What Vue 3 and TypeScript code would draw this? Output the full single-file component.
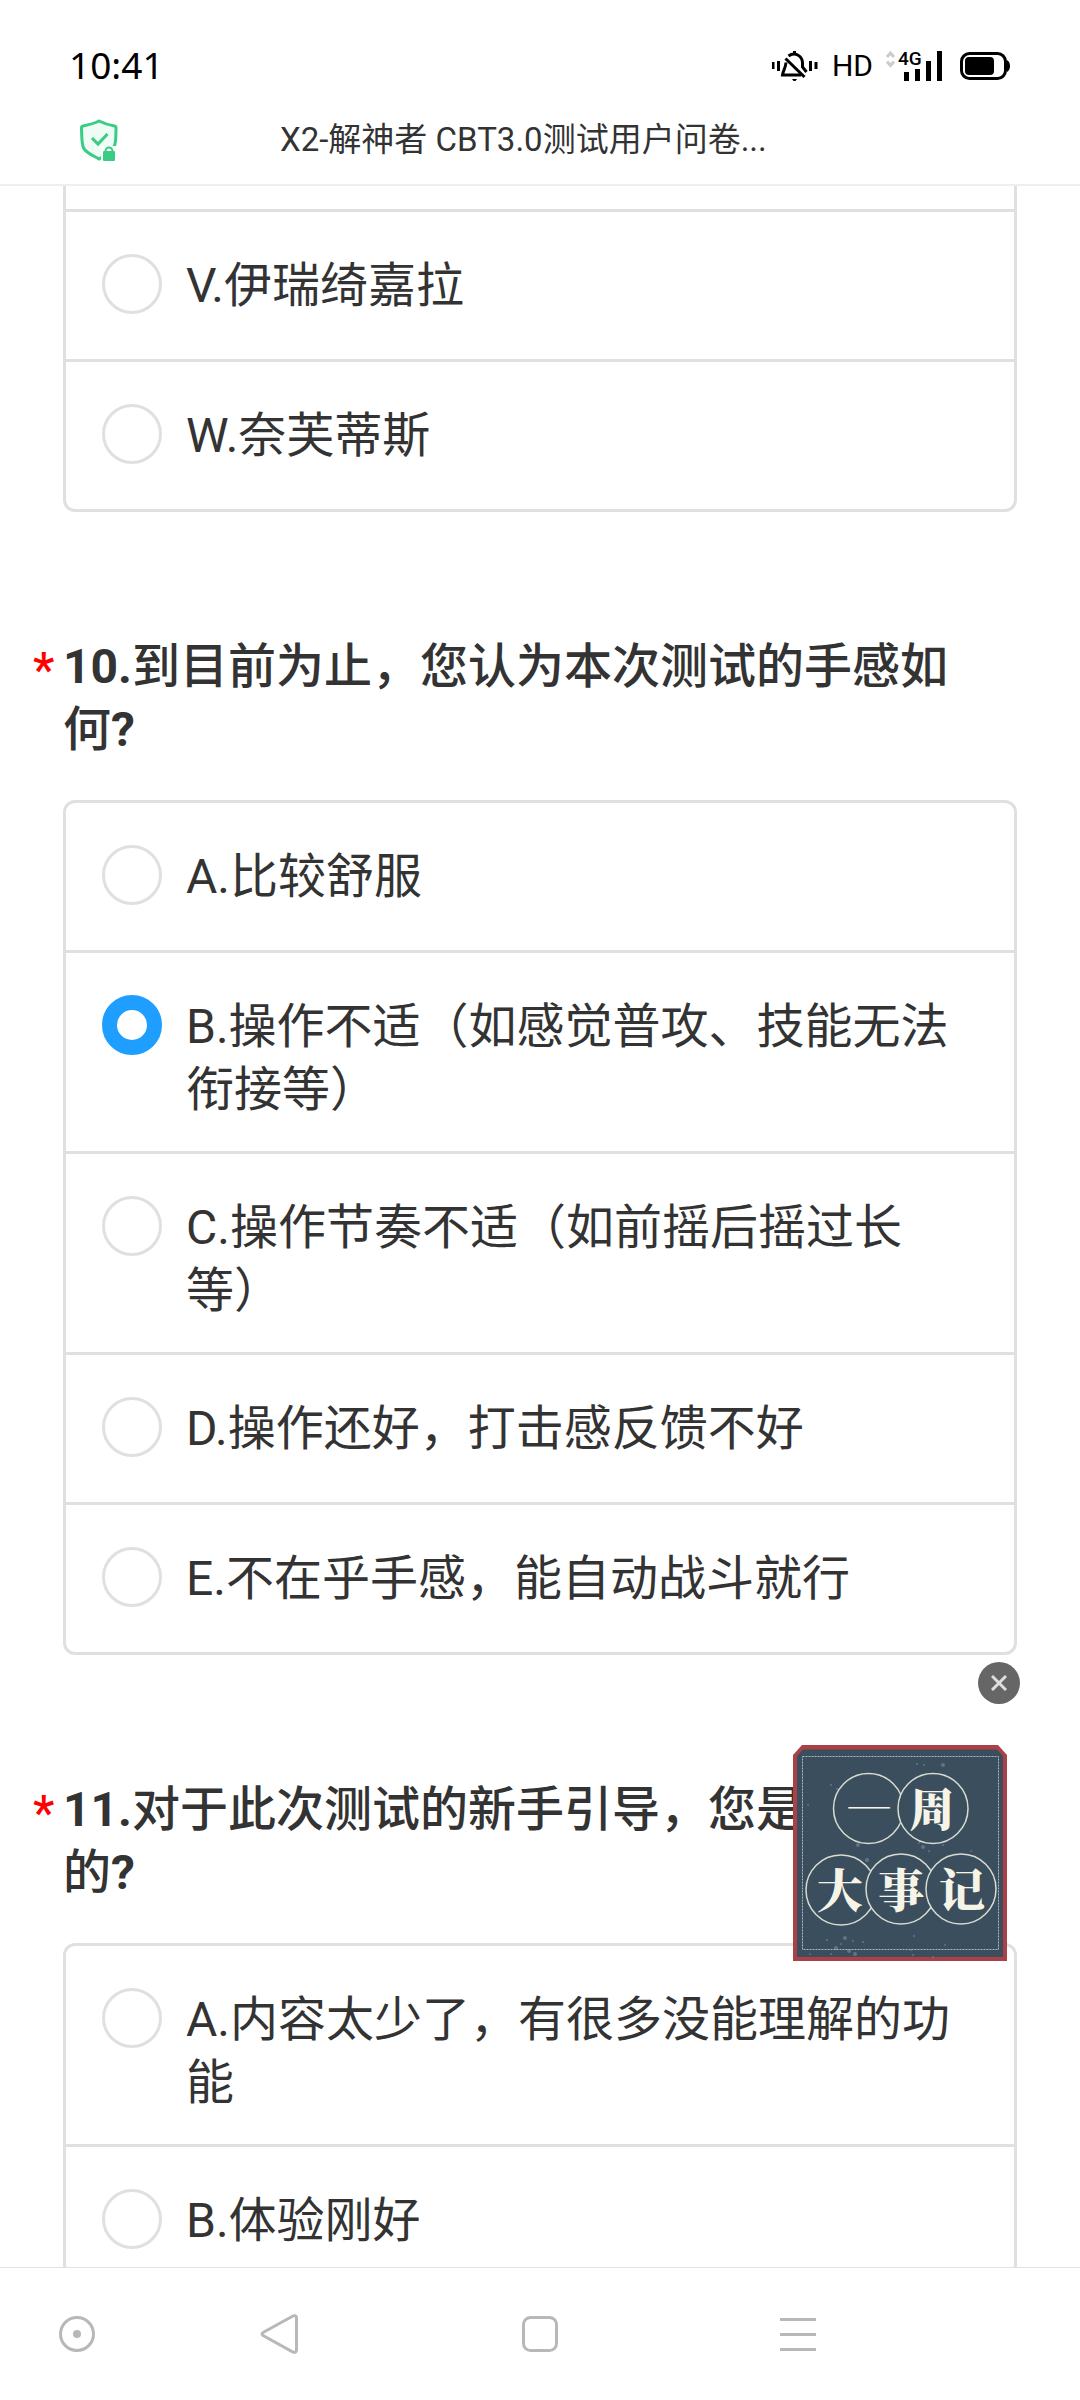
<script setup lang="ts">
import { ref } from 'vue'

interface Question {
  id: string
  number: string
  title: string
  options: string[]
}

const questions: Question[] = [
  {
    id: 'q9',
    number: '',
    title: '',
    options: ['V.伊瑞绮嘉拉', 'W.奈芙蒂斯'],
  },
  {
    id: 'q10',
    number: '10.',
    title: '到目前为止，您认为本次测试的手感如何',
    options: [
      'A.比较舒服',
      'B.操作不适（如感觉普攻、技能无法衔接等）',
      'C.操作节奏不适（如前摇后摇过长等）',
      'D.操作还好，打击感反馈不好',
      'E.不在乎手感，能自动战斗就行',
    ],
  },
  {
    id: 'q11',
    number: '11.',
    title: '对于此次测试的新手引导，您是\n的',
    options: ['A.内容太少了，有很多没能理解的功能', 'B.体验刚好'],
  },
]

const answers = ref<Record<string, number>>({ q9: -1, q10: 1, q11: -1 })
const showPromo = ref(true)

const specks: [number, number, number][] = [
  [124, 19, 1], [131, 20, 1], [150, 20, 2], [38, 40, 1], [44, 44, 1], [15, 60, 1],
  [65, 100, 2], [74, 115, 2], [130, 102, 2], [136, 106, 1], [126, 98, 1], [150, 100, 1],
  [178, 106, 1], [52, 193, 2], [60, 196, 1], [43, 203, 2], [56, 206, 2], [62, 209, 2],
  [70, 197, 1], [48, 199, 1], [38, 209, 1], [118, 205, 1], [120, 210, 1], [152, 200, 1],
  [121, 191, 1], [17, 209, 1], [34, 195, 1], [140, 212, 1],
]
</script>

<template>
  <div class="phone">
    <div class="status">
      <span class="clock">10:41</span>
      <div class="indicators">
        <svg class="bell" width="46" height="32" viewBox="0 0 46 32" fill="none" stroke="#000" stroke-width="3">
          <path d="M1 12v7M6.500 11v10M38.500 11v10M44 12v7" />
          <path d="M22.500 1v3M16.500 6c6-4.500 14-.5 14 7v4l4 5" />
          <path d="M14 12.500c-.5 6-3 8-3.500 12.500H29M13.500 8.500 32.500 27" />
          <path d="M20 29h5l-1.500 2h-2z" fill="#000" stroke="none" />
        </svg>
        <span class="hd">HD</span>
        <div class="signal">
          <svg width="56" height="32" viewBox="0 0 56 32">
            <path d="M1 7l3.500-4L8 7M1 11.500l3.500 4 3.500-4" fill="none" stroke="#ccc" stroke-width="3" />
            <path d="M18 22h5v9h-5zM29 19h5v12h-5zM40 11h5v20h-5zM51 1h5v30h-5z" />
          </svg>
          <span class="network">4G</span>
        </div>
        <svg class="battery" width="50" height="30" viewBox="0 0 50 30">
          <rect x="1.500" y="2.500" width="44" height="25" rx="8" fill="none" stroke="#000" stroke-width="3" />
          <rect x="5" y="6" width="29" height="18" rx="4" />
          <path d="M47 9q3 2 3 6t-3 6z" />
        </svg>
      </div>
    </div>

    <header class="bar">
      <svg class="shield" width="38" height="42" viewBox="0 0 38 42" fill="none" stroke="#38cc84" stroke-width="3">
        <path d="M19 2C14 4.500 8 6 3 7c-1 0-1.500 1-1.500 2 .3 9 0 15 2 20C6 34 14 37 19 40c9-5 15-8 16-15 1-5 1-11 1-16 0-1-.5-2-1.500-2C29 6 24 4.500 19 2z" fill="#effbf5" />
        <path d="m12 19 6 6 9.500-10" />
        <path d="M21 27h17v15H21z" fill="#fff" stroke="none" />
        <path d="M25.500 33v-1a3.500 3.500 0 0 1 7 0v1" stroke-width="2" />
        <rect x="23" y="32" width="12" height="10" rx="1" fill="#38cc84" stroke="none" />
      </svg>
      <h1 class="page-title">X2-解神者 CBT3.0测试用户问卷...</h1>
    </header>

    <main class="survey">
      <section v-for="q in questions" :key="q.id" class="question">
        <h2 v-if="q.title" class="title">
          <span class="star">*</span>
          <span :id="q.id" class="title-text"><b>{{ q.number }}</b>{{ q.title }}<b>?</b></span>
        </h2>
        <div class="card" :class="{ continued: !q.title }" role="radiogroup">
          <label v-for="(option, i) in q.options" :key="option" class="option">
            <input v-model="answers[q.id]" type="radio" :name="q.id" :value="i" />
            <span>{{ option }}</span>
          </label>
        </div>
      </section>
    </main>

    <aside v-if="showPromo" class="promo">
      <button class="close" type="button" aria-label="关闭" @click="showPromo = false">
        <svg width="16" height="16" viewBox="0 0 16 16" stroke="#ddd" stroke-width="3">
          <path d="m1 1 14 14M15 1 1 15" />
        </svg>
      </button>
      <a href="#" class="badge">
        <svg width="214" height="216" viewBox="0 0 214 216">
          <path d="M9 0H205L214 10V216H0V10z" fill="#a94147" />
          <path d="M10 4.500H204L210 11V212H4V11z" fill="#3a4e5e" />
          <circle v-for="(s, i) in specks" :key="i" :cx="s[0]" :cy="s[1]" :r="s[2]" fill="#9fb0ba" opacity=".4" />
          <rect x="9.500" y="11.500" width="196" height="193" fill="none" stroke="#aeb9bf" stroke-dasharray="2 1" />
          <g fill="#3a4e5e" stroke="#d8dcd0" stroke-width="1.500">
            <circle cx="75.500" cy="63.500" r="35" />
            <circle cx="140" cy="63.500" r="35" />
            <circle cx="48" cy="145" r="35" />
            <circle cx="108" cy="144" r="35" />
            <circle cx="168" cy="144" r="35" />
          </g>
          <g class="badge-text" text-anchor="middle">
            <text class="thin" x="76" y="80">一</text>
            <text x="139" y="81">周</text>
            <text x="47" y="162">大</text>
            <text x="108" y="162">事</text>
            <text x="169" y="162">记</text>
          </g>
        </svg>
      </a>
    </aside>

    <nav class="keys">
      <button type="button" aria-label="助手">
        <svg width="40" height="40" viewBox="0 0 40 40">
          <circle cx="20" cy="20" r="16.500" />
          <circle cx="20" cy="20" r="4" class="dot" />
        </svg>
      </button>
      <button type="button" aria-label="返回">
        <svg width="40" height="40" viewBox="0 0 40 40">
          <path d="M33.500 2.200 4.500 18.200q-3 1.800 0 3.600l29 16q4 1.500 4-2V4q0-3.300-4-1.800z" />
        </svg>
      </button>
      <button type="button" aria-label="主页">
        <svg width="40" height="40" viewBox="0 0 40 40">
          <rect x="3.500" y="3.500" width="33" height="33" rx="7" />
        </svg>
      </button>
      <button type="button" aria-label="菜单">
        <svg width="40" height="40" viewBox="0 0 40 40">
          <path d="M2 5.500h36M2 20.500h36M2 35.500h36" />
        </svg>
      </button>
    </nav>
  </div>
</template>

<style>
body {
  margin: 0;
  background: #fff;
}
</style>

<style scoped>
.phone {
  position: relative;
  display: flex;
  flex-direction: column;
  height: 100vh;
  overflow: hidden;
  background: #fff;
  color: #333;
  font-family: Roboto, "Noto Sans CJK SC", sans-serif;
}

.status {
  display: flex;
  flex: none;
  align-items: center;
  justify-content: space-between;
  box-sizing: border-box;
  height: 96px;
  padding: 36px 70px 0 69px;
  color: #000;
}

.clock {
  padding-bottom: 2px;
  font: 37px/58px "Noto Sans", sans-serif;
}

.indicators {
  display: flex;
  align-items: center;
}

.hd {
  margin-left: 14px;
  font: 30px/60px Roboto, sans-serif;
}

.signal {
  position: relative;
  display: flex;
  margin-left: 13px;
}

.network {
  position: absolute;
  top: -2px;
  left: 12px;
  font: 500 19px/22px Roboto, sans-serif;
}

.battery {
  margin-left: 18px;
}

.bar {
  display: flex;
  flex: none;
  align-items: center;
  height: 88px;
  padding-left: 80px;
  border-bottom: 2px solid #eee;
}

.page-title {
  margin: 0 0 0 162px;
  font-size: 33px;
  font-weight: 400;
  line-height: 48px;
}

.survey {
  flex: 1;
  min-height: 0;
  overflow: hidden;
}

.question {
  margin-bottom: 123px;
}

.title {
  display: flex;
  margin: 0 84px 39px 33px;
  font-size: 48px;
  font-weight: 500;
  line-height: 63px;
}

.title-text {
  white-space: pre-line;
}

.title-text b {
  font-weight: 700;
}

.star {
  flex: none;
  width: 30px;
  color: #f00;
  font-weight: 500;
  line-height: 69px;
}

.card {
  margin: 0 63px;
  border: 3px solid #e0e0e0;
  border-radius: 12px;
}

.continued {
  padding-top: 23px;
  border-top: 0;
  border-radius: 0 0 12px 12px;
}

.option {
  display: flex;
  gap: 24px;
  align-items: flex-start;
  box-sizing: border-box;
  min-height: 147px;
  padding: 42px 48px 30px 36px;
  font-size: 48px;
  line-height: 63px;
}

.option + .option,
.continued .option {
  border-top: 3px solid #e0e0e0;
  min-height: 150px;
}

.option input {
  flex: none;
  box-sizing: border-box;
  width: 60px;
  height: 60px;
  margin: 0;
  border: 3px solid #e0e0e0;
  border-radius: 50%;
  background: #fff;
  appearance: none;
}

.option input:checked {
  border: 15px solid #1e9fff;
}

.promo {
  position: absolute;
  right: 60px;
  bottom: 439px;
  display: flex;
  flex-direction: column;
  gap: 41px;
  align-items: flex-end;
}

.close {
  display: flex;
  align-items: center;
  justify-content: center;
  width: 42px;
  height: 42px;
  padding: 0;
  border: 0;
  border-radius: 50%;
  background: #666;
}

.badge {
  display: flex;
  margin-right: 13px;
}

.badge-text {
  fill: #f6f4e6;
  font-family: "Noto Serif CJK SC", "Noto Sans CJK SC", serif;
  font-size: 46px;
  font-weight: 900;
}

.badge-text .thin {
  font-family: "Noto Sans CJK SC", sans-serif;
  font-weight: 100;
}

.keys {
  display: grid;
  flex: none;
  grid-template-columns: 154fr 250fr 272fr 244fr 160fr;
  height: 132px;
  border-top: 1px solid #e2e2e2;
}

.keys button {
  display: flex;
  align-items: center;
  justify-content: center;
  padding: 0;
  border: 0;
  background: none;
}

.keys svg {
  fill: none;
  stroke: #b8b8b8;
  stroke-width: 3;
}

.keys .dot {
  fill: #b8b8b8;
  stroke: none;
}
</style>
